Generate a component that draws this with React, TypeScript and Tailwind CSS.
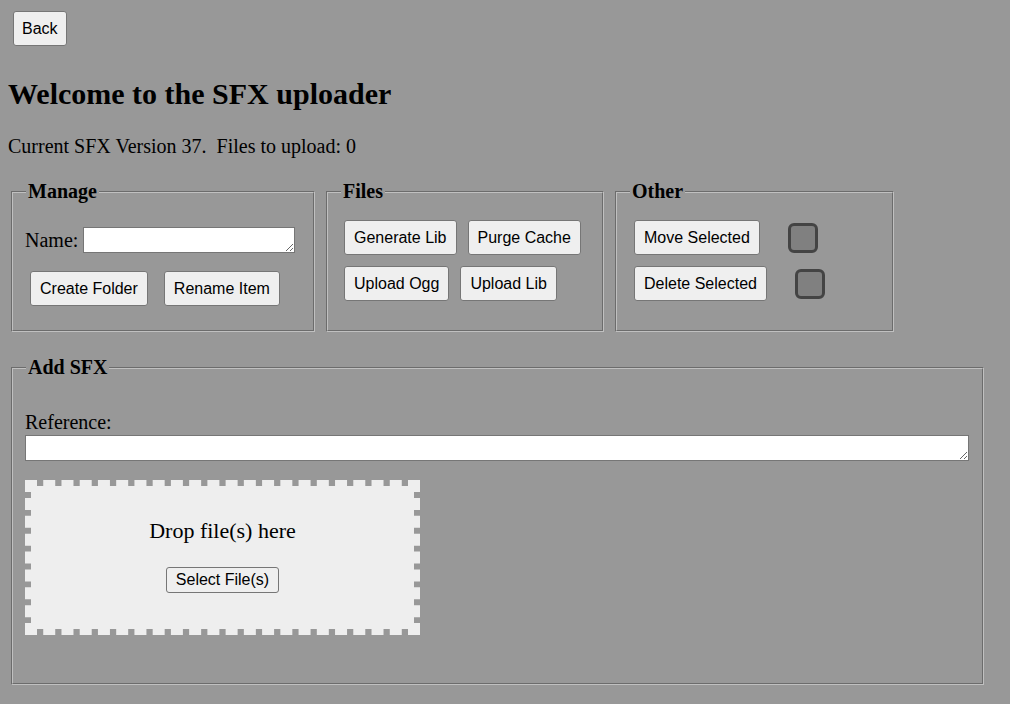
import React from "react";

const BTN_BASE =
  "bg-[#efefef] border border-[#767676] rounded-[3px] py-[7px] text-[16px] leading-[19px] text-black [font-family:'Liberation_Sans',Arial,sans-serif] whitespace-nowrap";
const BTN = `${BTN_BASE} px-[9px]`;

const FIELDSET =
  "border-2 [border-style:groove] border-[#c0c0c0] pl-[12px] pr-[12px] pt-[7px]";

const LEGEND = "px-[2px] ml-[1px] font-bold text-[20px] leading-[23px]";

function Checkbox() {
  return (
    <input
      type="checkbox"
      className="appearance-none w-[30px] h-[30px] rounded-[6px] border-[3px] border-[#444444] bg-[#808080]"
    />
  );
}

export default function App() {
  return (
    <div className="min-h-screen bg-[#989898] text-black text-[20px] leading-[23px] [font-family:'Liberation_Serif','Times_New_Roman',serif] pt-[11px] px-[8px] pb-[20px]">
      <button className={`${BTN_BASE} px-[8px] ml-[5px]`}>Back</button>

      <h2 className="font-bold text-[30px] leading-[34px] mt-[31px]">
        Welcome to the SFX uploader
      </h2>

      <p className="mt-[24px]">Current SFX Version 37.&nbsp; Files to upload: 0</p>

      <div className="flex mt-[22px]">
        {/* Manage */}
        <fieldset className={`${FIELDSET} w-[304px] ml-[3px] pb-[24px]`}>
          <legend className={LEGEND}>Manage</legend>
          <div className="flex items-center mt-[17px]">
            <label className="mr-[5px]">Name:</label>
            <textarea
              rows={1}
              className="w-[212px] h-[26px] bg-white border border-[#767676] resize"
            />
          </div>
          <div className="flex gap-[16px] mt-[18px] ml-[5px]">
            <button className={BTN}>Create Folder</button>
            <button className={BTN}>Rename Item</button>
          </div>
        </fieldset>

        {/* Files */}
        <fieldset className={`${FIELDSET} w-[278px] ml-[11px] pb-[12px]`}>
          <legend className={LEGEND}>Files</legend>
          <div className="flex flex-col gap-[11px] mt-[10px] ml-[4px]">
            <div className="flex gap-[11px]">
              <button className={BTN}>Generate Lib</button>
              <button className={BTN}>Purge Cache</button>
            </div>
            <div className="flex gap-[11px]">
              <button className={BTN}>Upload Ogg</button>
              <button className={BTN}>Upload Lib</button>
            </div>
          </div>
        </fieldset>

        {/* Other */}
        <fieldset className={`${FIELDSET} w-[279px] ml-[11px] pb-[12px]`}>
          <legend className={LEGEND}>Other</legend>
          <div className="flex flex-col gap-[11px] mt-[10px] ml-[5px]">
            <div className="flex items-center gap-[28px]">
              <button className={BTN}>Move Selected</button>
              <Checkbox />
            </div>
            <div className="flex items-center gap-[28px]">
              <button className={BTN}>Delete Selected</button>
              <Checkbox />
            </div>
          </div>
        </fieldset>
      </div>

      {/* Add SFX */}
      <fieldset className={`${FIELDSET} w-[973px] ml-[3px] mt-[24px] pb-[48px]`}>
        <legend className={LEGEND}>Add SFX</legend>
        <label className="block mt-[25px]">Reference:</label>
        <textarea
          rows={1}
          className="block w-[944px] h-[26px] mt-[1px] bg-white border border-[#767676] resize"
        />
        <div className="mt-[19px] w-[395px] h-[155px] border-[6px] border-dashed border-[#eeeeee] bg-[#eeeeee] bg-clip-padding flex flex-col items-center">
          <div className="text-[22px] leading-[25px] mt-[32px]">Drop file(s) here</div>
          <button className="mt-[24px] bg-[#efefef] border border-[#767676] rounded-[3px] px-[9px] py-[3px] text-[16px] leading-[18px] [font-family:'Liberation_Sans',Arial,sans-serif]">
            Select File(s)
          </button>
        </div>
      </fieldset>
    </div>
  );
}
